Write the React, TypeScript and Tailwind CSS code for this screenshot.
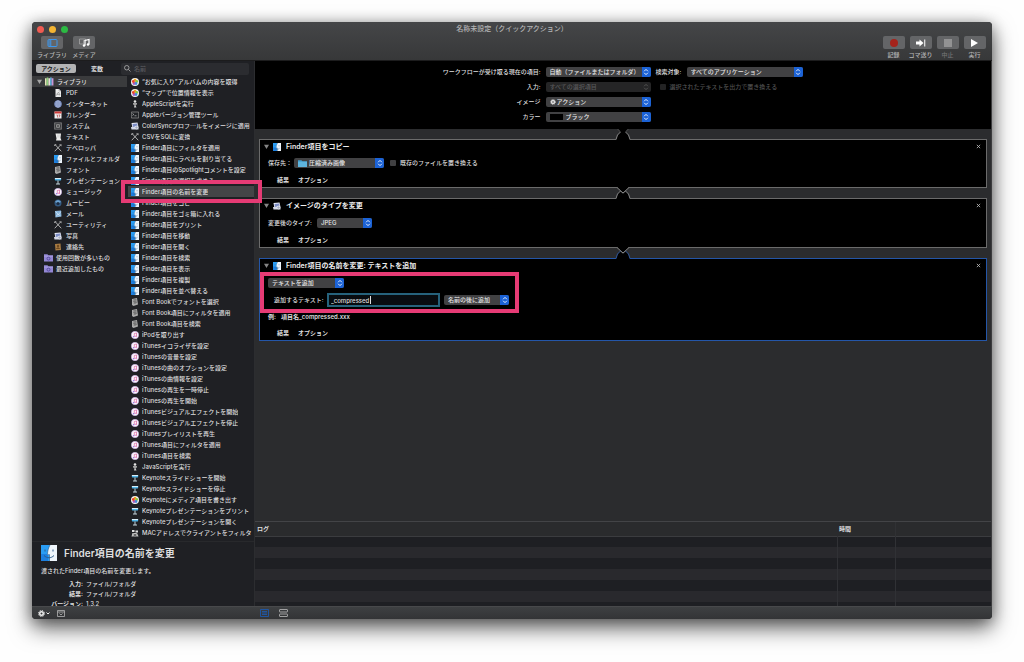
import type { ReactNode } from "react";

type IconName = keyof typeof icons;

const icons = {
    finder: (
        <>
            <path d="M0 0h9v16H0z" fill="#2a9df4" />
            <path d="M0 9h7v7H0z" fill="#1c7fe0" />
            <path d="M9 0h7v16H8.5V10H6.5C6.5 6 7.5 3 9 0z" fill="#eef5fb" />
            <path d="M4 4.5v2M12 4.5v2M3 10.5c3 3 7 3 10 0" fill="none" stroke="#2c5c8c" />
            <path d="M9 0C7.5 3 6.5 6 6.5 9.5h2V16" fill="none" stroke="#2c5c8c" strokeWidth="0.6" />
        </>
    ),
    photos: (
        <>
            <circle cx="8" cy="8" r="8" fill="#f4f4f4" />
            <circle cx="8" cy="4.5" r="2.8" fill="#f5a623" />
            <circle cx="11.4" cy="7" r="2.8" fill="#8cc63f" />
            <circle cx="10" cy="11" r="2.8" fill="#3b8fd8" />
            <circle cx="6" cy="11" r="2.8" fill="#a05cc0" />
            <circle cx="4.6" cy="7" r="2.8" fill="#e8452f" />
        </>
    ),
    script: (
        <>
            <circle cx="8" cy="3" r="2.6" fill="#e5e5e5" />
            <path d="M4 6h8l-1 4H9l2 5H6l1-5H5z" fill="#c8c8c8" />
            <path d="M5 8h6" stroke="#333" />
        </>
    ),
    terminal: (
        <>
            <path d="M.7 2h14.6v12H.7z" fill="#202226" stroke="#a8a8a8" strokeWidth="1.2" />
            <path d="M3 5l2.5 2L3 9M7 9.5h4" fill="none" stroke="#ddd" strokeWidth="1.2" />
        </>
    ),
    preview: (
        <>
            <path d="M1 2l12-1 2 9-12 3z" fill="#e7eaf5" />
            <path d="M3 4l9-1 1 5-9 2z" fill="#7c8dc6" />
            <path d="M0 10h15v5H1z" fill="#d5d9e8" />
            <circle cx="11" cy="11" r="3" fill="#a4adc2" stroke="#fff" />
        </>
    ),
    tools: (
        <path d="M2 1l12 13M14 1L2 14M1 3l3-2M12 1l3 3" fill="none" stroke="#c7c7c7" strokeWidth="1.7" strokeLinecap="round" />
    ),
    fontbook: (
        <>
            <path d="M2 2l10-2 2 13-9 3-3-2z" fill="#a9a9a9" />
            <path d="M4 4l7-1M4 7l8-1M5 10l7-1M8 3v9" stroke="#4b4b4b" />
        </>
    ),
    music: (
        <>
            <circle cx="8" cy="8" r="7.4" fill="#fbf8fd" stroke="#c9a5e6" />
            <path d="M6.5 11.5V5l4.5-1v6.5" fill="none" stroke="#d8569a" strokeWidth="1.3" />
            <circle cx="5.5" cy="11.3" r="1.4" fill="#7e66e0" />
            <circle cx="10" cy="10.4" r="1.4" fill="#e0529a" />
        </>
    ),
    keynote: (
        <>
            <path d="M1 3h14l-1.5 4h-11z" fill="#4fb4e8" />
            <path d="M2 2h12v2H2z" fill="#d9effa" />
            <path d="M7 7h2v6H7zM4 13h8v2H4z" fill="#c3d3dc" />
        </>
    ),
    network: (
        <>
            <path d="M2 2h5v4H2zM9 3h5v4H9z" fill="#ddd" />
            <path d="M3 8h9l3 7H1z" fill="#c2c2c2" />
            <path d="M5 10l6 4M11 10l-6 4" stroke="#333" strokeWidth="1.4" />
        </>
    ),
    library: (
        <>
            <path d="M0 2h3v13H0z" fill="#e3e3b8" />
            <path d="M3 1h3v14H3z" fill="#8ccf7c" />
            <path d="M6 2h3v13H6z" fill="#e6ded5" />
            <path d="M9 1h3v14H9z" fill="#62b2e0" />
            <path d="M12 2h3v13h-3z" fill="#c795d6" />
        </>
    ),
    pdf: (
        <>
            <path d="M3 0h7l4 4v12H3z" fill="#ececec" />
            <path d="M10 0v4h4" fill="none" stroke="#999" />
            <path d="M5 13l4-7 3 6-7-2" fill="none" stroke="#777" />
        </>
    ),
    globe: (
        <>
            <circle cx="8" cy="8" r="7.5" fill="#7185ba" />
            <path d="M1 8h14M8 1v14M3 4h10M3 12h10" stroke="#b9c5e3" />
            <ellipse cx="8" cy="8" rx="4" ry="7" fill="none" stroke="#b9c5e3" />
        </>
    ),
    calendar: (
        <>
            <path d="M1 1h14v14H1z" fill="#f0f0f0" />
            <path d="M1 1h14v4H1z" fill="#cf3a38" />
            <path d="M5 8h2v5M9 8h3l-2 5" fill="none" stroke="#b23a3a" strokeWidth="1.3" />
        </>
    ),
    system: (
        <>
            <path d="M1 1.5h14v13H1z" fill="#3a3b3d" stroke="#a5a5a5" />
            <path d="M3 12l10-8M3 4l10 8" stroke="#bbb" />
            <circle cx="8" cy="8" r="3" fill="#444" stroke="#ddd" />
        </>
    ),
    text: (
        <>
            <path d="M3 1h11l-1 9 2 5H4l1-4z" fill="#ececec" />
            <path d="M6 4h6M6 6h5M6 8h5" stroke="#c4c4c4" />
        </>
    ),
    movie: (
        <>
            <circle cx="8" cy="8" r="7" fill="#345a82" />
            <path d="M2 6c3-5 9-5 12 0L8 9z" fill="#6ba2d0" />
            <circle cx="8" cy="9" r="3" fill="#1b2b42" />
        </>
    ),
    mail: (
        <>
            <path d="M2 2l12-1 1 12-12 2z" fill="#8bb7dd" />
            <path d="M3 3l6 6 5-6M4 13l4-5 5 4" fill="none" stroke="#eef6fc" />
        </>
    ),
    contacts: (
        <>
            <path d="M2 2l11-1 1 13-11 1z" fill="#a87b42" />
            <circle cx="8" cy="6" r="2.4" fill="#6e4a22" />
            <path d="M4 12c1-4 7-4 8 0z" fill="#6e4a22" />
        </>
    ),
    smart: (
        <>
            <path d="M0 2h6l2 2h8v11H0z" fill="#9387d4" />
            <path d="M0 5h16v1H0z" fill="#b9b0ea" />
            <circle cx="8" cy="10" r="2.6" fill="none" stroke="#4a3f91" strokeWidth="1.4" />
        </>
    ),
    folder: (
        <>
            <path d="M0 2h6l2 2h8v10H0z" fill="#3f9fd0" />
            <path d="M0 5h16v9H0z" fill="#5db4de" />
        </>
    ),
};

const Icon = ({ name, className = "size-2" }: { name: IconName; className?: string }) => (
    <svg viewBox="0 0 16 16" className={`shrink-0 ${className}`} aria-hidden="true">
        {icons[name]}
    </svg>
);

const categories: [IconName, string][] = [
    ["pdf", "PDF"],
    ["globe", "インターネット"],
    ["calendar", "カレンダー"],
    ["system", "システム"],
    ["text", "テキスト"],
    ["tools", "デベロッパ"],
    ["finder", "ファイルとフォルダ"],
    ["fontbook", "フォント"],
    ["keynote", "プレゼンテーション"],
    ["music", "ミュージック"],
    ["movie", "ムービー"],
    ["mail", "メール"],
    ["tools", "ユーティリティ"],
    ["preview", "写真"],
    ["contacts", "連絡先"],
];

const smartGroups = ["使用回数が多いもの", "最近追加したもの"];

const selectedAction = "Finder項目の名前を変更";

const actions: [IconName, string][] = [
    ["photos", "“お気に入り”アルバムの内容を取得"],
    ["photos", "“マップ”で位置情報を表示"],
    ["script", "AppleScriptを実行"],
    ["terminal", "Appleバージョン管理ツール"],
    ["preview", "ColorSyncプロフ⋯ルをイメージに適用"],
    ["tools", "CSVをSQLに変換"],
    ["finder", "Finder項目にフィルタを適用"],
    ["finder", "Finder項目にラベルを割り当てる"],
    ["finder", "Finder項目のSpotlightコメントを設定"],
    ["finder", "Finder項目の選択を求める"],
    ["finder", selectedAction],
    ["finder", "Finder項目をコピー"],
    ["finder", "Finder項目をゴミ箱に入れる"],
    ["finder", "Finder項目をプリント"],
    ["finder", "Finder項目を移動"],
    ["finder", "Finder項目を開く"],
    ["finder", "Finder項目を検索"],
    ["finder", "Finder項目を表示"],
    ["finder", "Finder項目を複製"],
    ["finder", "Finder項目を並べ替える"],
    ["fontbook", "Font Bookでフォントを選択"],
    ["fontbook", "Font Book項目にフィルタを適用"],
    ["fontbook", "Font Book項目を検索"],
    ["music", "iPodを取り出す"],
    ["music", "iTunesイコライザを設定"],
    ["music", "iTunesの音量を設定"],
    ["music", "iTunesの曲のオプションを設定"],
    ["music", "iTunesの曲情報を設定"],
    ["music", "iTunesの再生を一時停止"],
    ["music", "iTunesの再生を開始"],
    ["music", "iTunesビジュアルエフェクトを開始"],
    ["music", "iTunesビジュアルエフェクトを停止"],
    ["music", "iTunesプレイリストを再生"],
    ["music", "iTunes項目にフィルタを適用"],
    ["music", "iTunes項目を検索"],
    ["script", "JavaScriptを実行"],
    ["keynote", "Keynoteスライドショーを開始"],
    ["keynote", "Keynoteスライドショーを停止"],
    ["photos", "Keynoteにメディア項目を書き出す"],
    ["keynote", "Keynoteプレゼンテーションをプリント"],
    ["keynote", "Keynoteプレゼンテーションを開く"],
    ["network", "MACアドレスでクライアントをフィルタ"],
];

const ToolButton = ({ label, disabled, children }: { label: string; disabled?: boolean; children: ReactNode }) => (
    <button
        type="button"
        disabled={disabled}
        className="flex flex-col items-center gap-px whitespace-nowrap text-[#b4b4b5] disabled:text-[#747475]"
    >
        <span className="flex h-[13px] w-[22px] items-center justify-center rounded-[2px] bg-[#646567]">{children}</span>
        <span className="leading-[10px]">{label}</span>
    </button>
);

type PopupProps = {
    id: string;
    label?: string;
    value: string;
    className: string;
    textClass?: string;
    disabled?: boolean;
    children?: ReactNode;
};

const Popup = ({ id, label, value, className, textClass = "pl-1", disabled, children }: PopupProps) => (
    <span className={`relative flex h-[10px] shrink-0 items-center ${className}`}>
        <select
            id={id}
            aria-label={label}
            disabled={disabled}
            className={`h-full w-full appearance-none rounded-[2px] bg-[#414143] pr-[10px] text-[#e6e6e6] disabled:bg-[#252526] disabled:text-[#59595a] disabled:opacity-100 ${textClass}`}
        >
            <option>{value}</option>
        </select>
        {children && <span className="pointer-events-none absolute left-1 flex items-center">{children}</span>}
        <span
            className={`pointer-events-none absolute right-0 flex h-full w-[9px] items-center justify-center rounded-r-[2px] ${disabled ? "text-[#5a5a5a]" : "bg-[#1b62d6] text-white"}`}
        >
            <svg viewBox="0 0 8 10" className="h-2 w-[6px]" fill="none" stroke="currentColor" strokeWidth="1.2">
                <path d="M1.5 4L4 1.5 6.5 4M1.5 6L4 8.5 6.5 6" />
            </svg>
        </span>
    </span>
);

// The notch that links one action's output to the next action's input
const Connector = ({ first, active }: { first?: boolean; active?: boolean }) => (
    <div className="relative z-10 flex h-[10px] justify-center">
        <svg viewBox="0 0 16 12" className="-my-px h-3 w-4 shrink-0" fill="none">
            <path d="M1 12L2.5 7.5 5 4.5 8 7l3-2.500 2.500 3L15 12z" fill="#000" />
            <path d={first ? "M3 0L5 3v4h6V3l2-3z" : "M2 0l6 6 6-6z"} fill="#000" />
            <path d="M1 11.5L2.5 7 5.5 4M15 11.5L13.5 7 10.5 4" stroke={active ? "#31599c" : "#858585"} />
            {first ? (
                <path d="M2.5 1L5.5 4M13.5 1L10.5 4" stroke="#4a4a4b" />
            ) : (
                <path d="M2 .5L8 6l6-5.5" stroke="#858585" />
            )}
        </svg>
    </div>
);

type ActionCardProps = { icon: IconName; title: string; active?: boolean; children: ReactNode };

const ActionCard = ({ icon, title, active, children }: ActionCardProps) => (
    <section className={`mx-1 border bg-black ${active ? "border-[#2456a8]" : "border-[#6b6b6b]"}`}>
        <header className="flex h-[13px] items-center pr-[5px] pl-1">
            <button type="button" aria-label="開閉" className="w-[9px]">
                <svg viewBox="0 0 8 8" className="size-[5px] fill-[#858585]">
                    <path d="M0 1h8L4 8z" />
                </svg>
            </button>
            <Icon name={icon} />
            <h2 className="ml-[5px] text-[7px] font-semibold text-[#eee]">{title}</h2>
            <button type="button" aria-label="削除" className="ml-auto">
                <svg viewBox="0 0 6 6" className="size-[5px] stroke-[#bbb]">
                    <path d="M1 1l4 4M5 1L1 5" />
                </svg>
            </button>
        </header>
        {children}
        <footer className="flex h-[14px] items-center gap-[9px] pl-[17px] font-semibold">
            <button type="button">結果</button>
            <button type="button">オプション</button>
        </footer>
    </section>
);

const Toolbar = () => (
    <header className="flex h-[39px] shrink-0 flex-col border-b border-[#1c1c1d] bg-linear-to-b from-[#454648] to-[#373839]">
        <div className="grid h-[14px] grid-cols-3 items-center">
            <div className="flex gap-[5px] pl-[5px]">
                <button type="button" aria-label="閉じる" className="size-[7px] rounded-full bg-[#f05b51]" />
                <button type="button" aria-label="しまう" className="size-[7px] rounded-full bg-[#f3b432]" />
                <button type="button" aria-label="拡大" className="size-[7px] rounded-full bg-[#2cba43]" />
            </div>
            <h1 className="text-center text-[7px] text-[#b5b5b6]">名称未設定（クイックアクション）</h1>
        </div>
        <div className="flex justify-between pr-1 pl-1">
            <div className="grid grid-cols-[32px_32px]">
                <ToolButton label="ライブラリ">
                    <svg viewBox="0 0 20 16" className="h-2 w-[11px]" fill="none" stroke="#3d98ee" strokeWidth="2">
                        <rect x="1" y="1" width="18" height="14" rx="2" />
                        <path d="M6.5 1v14M2 4h3M2 8h3M2 12h3" />
                    </svg>
                </ToolButton>
                <ToolButton label="メディア">
                    <svg viewBox="0 0 22 18" className="h-[9px] w-[11px]" fill="none">
                        <path d="M1 2h12v3H9v7H1z" stroke="#a8a8a8" strokeWidth="1.5" />
                        <path d="M12 15V5l8-2v10" stroke="#fff" strokeWidth="2.5" />
                        <circle cx="10" cy="15" r="2.5" fill="#fff" />
                        <circle cx="18" cy="13" r="2.5" fill="#fff" />
                    </svg>
                </ToolButton>
            </div>
            <div className="grid grid-cols-[27px_27px_27px_27px]">
                <ToolButton label="記録">
                    <span className="size-2 rounded-full bg-[#a5231b]" />
                </ToolButton>
                <ToolButton label="コマ送り">
                    <svg viewBox="0 0 20 16" className="h-2 w-[10px]" fill="#fff">
                        <path d="M0 5h7V1l8 7-8 7v-4H0zM16.500 1H18.500v14h-2z" />
                    </svg>
                </ToolButton>
                <ToolButton label="中止" disabled>
                    <span className="size-2 bg-[#929293]" />
                </ToolButton>
                <ToolButton label="実行">
                    <svg viewBox="0 0 14 16" className="h-2 w-[7px]" fill="#fff">
                        <path d="M0 0l14 8-14 8z" />
                    </svg>
                </ToolButton>
            </div>
        </div>
    </header>
);

const Sidebar = () => (
    <aside className="flex w-[223px] shrink-0 flex-col border-r border-[#2c2d30] bg-[#1f2024]">
        <div className="flex h-[15px] shrink-0 items-center pr-[5px] pl-1">
            <button type="button" className="h-[9px] w-10 rounded-[2px] bg-[#b3b4b5] font-semibold text-[#1b1b1b]">
                アクション
            </button>
            <button type="button" className="w-[42px] font-bold">
                変数
            </button>
            <label className="ml-[3px] flex h-3 min-w-0 flex-1 items-center gap-[3px] rounded-[2px] bg-[#2b2c30] pl-[3px]">
                <svg viewBox="0 0 14 14" className="size-[7px] shrink-0" fill="none" stroke="#bbb" strokeWidth="1.5">
                    <circle cx="5.5" cy="5.5" r="4.5" />
                    <path d="M9 9l4 4" />
                </svg>
                <input type="search" aria-label="名前" placeholder="名前" className="h-full min-w-0 flex-1 placeholder:text-[#5b5c60]" />
            </label>
        </div>
        <div className="flex min-h-0 flex-1">
            <ul className="w-[95px] shrink-0">
                <li className="flex h-[11px] items-center bg-[#3a3b3d] pl-[5px]">
                    <svg viewBox="0 0 8 8" className="mr-[3px] size-[5px] fill-[#a5a5a5]">
                        <path d="M0 1h8L4 8z" />
                    </svg>
                    <Icon name="library" className="size-[9px]" />
                    <span className="ml-[3px]">ライブラリ</span>
                </li>
                {categories.map(([icon, label]) => (
                    <li key={label} className="flex h-[11px] items-center gap-1 pl-[22px] whitespace-nowrap">
                        <Icon name={icon} />
                        {label}
                    </li>
                ))}
                {smartGroups.map((label) => (
                    <li key={label} className="flex h-[11px] items-center gap-[3px] pl-3 whitespace-nowrap">
                        <Icon name="smart" className="size-[9px]" />
                        {label}
                    </li>
                ))}
            </ul>
            <ul className="ml-px min-w-0 flex-1">
                {actions.map(([icon, label]) => (
                    <li
                        key={label}
                        className={`relative flex h-[11px] items-center gap-[3px] pl-[3px] ${label === selectedAction ? "z-20 bg-[#444547]" : ""}`}
                    >
                        <Icon name={icon} />
                        <span className="min-w-0 overflow-hidden whitespace-nowrap">{label}</span>
                        {label === selectedAction && (
                            <span className="absolute -inset-y-[6px] -right-2 -left-[7px] border-4 border-[#e63b75]" />
                        )}
                    </li>
                ))}
            </ul>
        </div>
        <div className="h-[65px] shrink-0 overflow-hidden border-t border-[#28292c] pt-[3px] pl-[9px]">
            <div className="flex items-center gap-[7px]">
                <Icon name="finder" className="size-4" />
                <h2 className="text-[10px] leading-4 font-semibold">{selectedAction}</h2>
            </div>
            <p className="mt-[5px] leading-[10px]">渡されたFinder項目の名前を変更します。</p>
            <dl className="mt-[3px] grid grid-cols-[42px_1fr] gap-x-[3px] leading-[10px]">
                <dt className="text-right font-semibold">入力:</dt>
                <dd>ファイル/フォルダ</dd>
                <dt className="text-right font-semibold">結果:</dt>
                <dd>ファイル/フォルダ</dd>
                <dt className="text-right font-semibold">バージョン:</dt>
                <dd>1.3.2</dd>
            </dl>
        </div>
    </aside>
);

const WorkflowSettings = () => (
    <div className="grid h-[68px] shrink-0 auto-rows-[10px] grid-cols-[97px_105px_26px_116px] items-center justify-center gap-x-[5px] gap-y-[5px] bg-black pt-[6px] whitespace-nowrap">
        <label htmlFor="receives" className="justify-self-end">ワークフローが受け取る現在の項目:</label>
        <Popup id="receives" value="自動（ファイルまたはフォルダ）" className="w-full" />
        <label htmlFor="target">検索対象:</label>
        <Popup id="target" value="すべてのアプリケーション" className="w-full" />
        <label htmlFor="input" className="justify-self-end">入力:</label>
        <Popup id="input" value="すべての選択項目" className="w-full" disabled />
        <label className="col-span-2 flex items-center gap-1 pl-1 text-[#505051]">
            <input type="checkbox" disabled className="size-[6px] appearance-none rounded-[1px] bg-[#232324]" />
            選択されたテキストを出力で置き換える
        </label>
        <label htmlFor="image" className="justify-self-end">イメージ</label>
        <Popup id="image" value="アクション" className="w-full" textClass="pl-[11px]">
            <svg viewBox="0 0 12 12" className="size-[6px]" fill="none" stroke="#ddd">
                <circle cx="6" cy="6" r="3" strokeWidth="3" />
                <circle cx="6" cy="6" r="5" strokeWidth="1.5" strokeDasharray="2 2" />
            </svg>
        </Popup>
        <label htmlFor="color" className="col-start-1 justify-self-end">カラー</label>
        <Popup id="color" value="ブラック" className="w-full" textClass="pl-5">
            <span className="h-[6px] w-[13px] bg-black" />
        </Popup>
    </div>
);

const Log = () => (
    <div className="h-[85px] shrink-0 overflow-hidden border-t border-[#434447]">
        <table className="w-full table-fixed border-collapse text-left">
            <colgroup>
                <col />
                <col className="w-[58px]" />
                <col className="w-24" />
            </colgroup>
            <thead className="bg-[#2a2b2d]">
                <tr className="h-[14px] border-b border-[#3b3c3f]">
                    <th className="pl-[2px]">ログ</th>
                    <th className="pl-[2px]">時間</th>
                    <th className="border-l border-[#303134]" />
                </tr>
            </thead>
            <tbody>
                {Array.from({ length: 7 }, (_, index) => (
                    <tr key={index} className="h-[11px] odd:bg-[#1e1f23] even:bg-[#29292d]">
                        <td />
                        <td className="border-x border-[#303135]" />
                        <td />
                    </tr>
                ))}
            </tbody>
        </table>
    </div>
);

const StatusBar = () => (
    <footer className="flex h-[13px] shrink-0 items-center border-t border-[#48494b] bg-linear-to-b from-[#3e4042] to-[#333436]">
        <div className="flex w-[223px] items-center pl-[6px]">
            <button type="button" aria-label="アクションメニュー" className="flex items-center gap-px">
                <svg viewBox="0 0 14 14" className="size-[7px]" fill="none" stroke="#eee">
                    <circle cx="7" cy="7" r="3.5" strokeWidth="3" />
                    <circle cx="7" cy="7" r="6" strokeWidth="2" strokeDasharray="2.4 2.3" />
                </svg>
                <svg viewBox="0 0 8 6" className="h-[3px] w-1" fill="none" stroke="#eee" strokeWidth="2">
                    <path d="M1 1l3 3 3-3" />
                </svg>
            </button>
            <button type="button" aria-label="説明を隠す" className="ml-[7px]">
                <svg viewBox="0 0 16 14" className="h-[7px] w-2" fill="none" stroke="#bbb" strokeWidth="1.5">
                    <path d="M1 1h14v12H1zM1 4h14M5 7l3 3 3-3" />
                </svg>
            </button>
        </div>
        <div className="flex items-center gap-[10px] pl-[5px]">
            <button type="button" aria-label="ログ">
                <svg viewBox="0 0 18 16" className="h-2 w-[9px]" fill="none" stroke="#1b5cb8" strokeWidth="1.6">
                    <path d="M1 1h16v14H1zM4 5h10M4 8h10M4 11h10" />
                </svg>
            </button>
            <button type="button" aria-label="変数">
                <svg viewBox="0 0 18 16" className="h-2 w-[9px]" fill="none" stroke="#bbb" strokeWidth="1.6">
                    <rect x="1" y="1" width="16" height="5" rx="1" />
                    <rect x="1" y="10" width="16" height="5" rx="1" />
                </svg>
            </button>
        </div>
    </footer>
);

export default function App() {
    return (
        <div className="flex h-screen flex-col overflow-hidden bg-[#fefefe] px-8 pt-[22px] pb-[43px] font-['Inter','Noto_Sans_CJK_JP',sans-serif] text-[6px] leading-[10px] font-medium text-[#dededf]">
            <div className="flex min-h-0 flex-1 flex-col overflow-hidden rounded-[4px] bg-[#2b2c2e] shadow-[0_9px_22px_rgba(0,0,0,0.6),0_2px_14px_rgba(0,0,0,0.3)]">
                <Toolbar />
                <div className="flex min-h-0 flex-1">
                    <Sidebar />
                    <main className="flex min-w-0 flex-1 flex-col border-r border-[#3b3b3d]">
                        <WorkflowSettings />
                        <div className="min-h-0 flex-1">
                            <Connector first />
                            <ActionCard icon="finder" title="Finder項目をコピー">
                                <div className="flex h-5 items-center pl-2 whitespace-nowrap">
                                    <label htmlFor="destination" className="w-[26px]">保存先：</label>
                                    <Popup id="destination" value="圧縮済み画像" className="w-[90px]" textClass="pl-[15px]">
                                        <Icon name="folder" className="size-[9px]" />
                                    </Popup>
                                    <label className="ml-[6px] flex items-center gap-1">
                                        <input type="checkbox" className="size-[6px] appearance-none rounded-[1px] bg-[#404042]" />
                                        既存のファイルを置き換える
                                    </label>
                                </div>
                            </ActionCard>
                            <Connector />
                            <ActionCard icon="preview" title="イメージのタイプを変更">
                                <div className="flex h-[21px] items-center pl-2 whitespace-nowrap">
                                    <label htmlFor="type" className="w-[49px]">変更後のタイプ:</label>
                                    <Popup id="type" value="JPEG" className="w-[55px]" />
                                </div>
                            </ActionCard>
                            <Connector active />
                            <ActionCard icon="finder" title="Finder項目の名前を変更: テキストを追加" active>
                                <div className="relative flex flex-col gap-[5px] pt-[6px] pb-1 pl-2 whitespace-nowrap">
                                    <Popup id="mode" label="名前の変更方法" value="テキストを追加" className="w-[76px]" />
                                    <div className="flex items-center pl-[6px]">
                                        <label htmlFor="addition" className="w-[53px]">追加するテキスト:</label>
                                        <span className="relative flex w-[113px] items-center">
                                            <input
                                                id="addition"
                                                defaultValue="_compressed"
                                                className="h-[14px] w-full border-2 border-[#26627c] bg-[#080c10] px-[2px] outline-none"
                                            />
                                            <span className="absolute left-[43px] h-2 w-px bg-[#dededf]" />
                                        </span>
                                        <Popup id="position" label="追加する位置" value="名前の後に追加" className="ml-1 w-[65px]" />
                                    </div>
                                    <p className="flex gap-[5px] leading-[10px] font-semibold">
                                        <span>例:</span>
                                        <span>項目名_compressed.xxx</span>
                                    </p>
                                    <span className="pointer-events-none absolute top-0 left-0 h-[41px] w-[259px] border-4 border-[#e63b75]" />
                                </div>
                            </ActionCard>
                        </div>
                        <Log />
                    </main>
                </div>
                <StatusBar />
            </div>
        </div>
    );
}
